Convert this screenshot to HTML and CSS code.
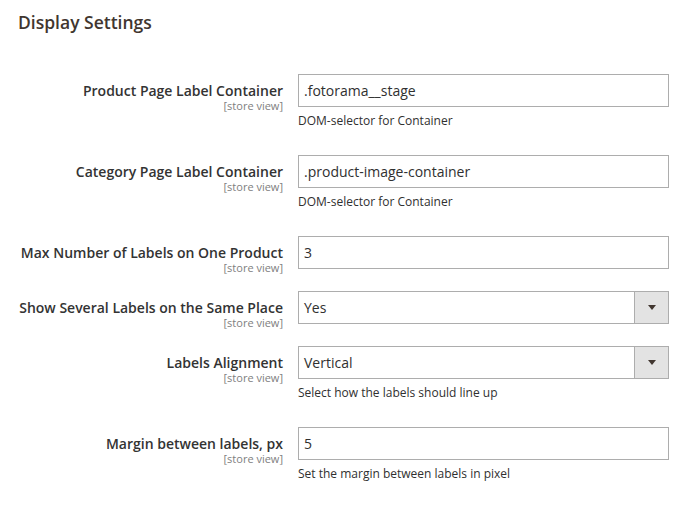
FILE: index.html
```html
<!DOCTYPE html>
<html lang="en">
<head>
<meta charset="utf-8">
<title>Display Settings</title>
<link rel="stylesheet" href="styles.css">
</head>
<body>
<section class="section">
  <h2 class="section-title">Display Settings</h2>
  <div class="config">
    <div class="row">
      <div class="label"><span class="label-text">Product Page Label Container</span><span class="scope">[store view]</span></div>
      <div class="value">
        <div class="input">.fotorama__stage</div>
        <p class="note">DOM-selector for Container</p>
      </div>
    </div>
    <div class="row">
      <div class="label"><span class="label-text">Category Page Label Container</span><span class="scope">[store view]</span></div>
      <div class="value">
        <div class="input">.product-image-container</div>
        <p class="note">DOM-selector for Container</p>
      </div>
    </div>
    <div class="row">
      <div class="label"><span class="label-text">Max Number of Labels on One Product</span><span class="scope">[store view]</span></div>
      <div class="value">
        <div class="input">3</div>
      </div>
    </div>
    <div class="row">
      <div class="label"><span class="label-text">Show Several Labels on the Same Place</span><span class="scope">[store view]</span></div>
      <div class="value">
        <div class="select"><span class="select-value">Yes</span><span class="select-arrow"></span></div>
      </div>
    </div>
    <div class="row">
      <div class="label"><span class="label-text">Labels Alignment</span><span class="scope">[store view]</span></div>
      <div class="value">
        <div class="select"><span class="select-value">Vertical</span><span class="select-arrow"></span></div>
        <p class="note">Select how the labels should line up</p>
      </div>
    </div>
    <div class="row">
      <div class="label"><span class="label-text">Margin between labels, px</span><span class="scope">[store view]</span></div>
      <div class="value">
        <div class="input">5</div>
        <p class="note">Set the margin between labels in pixel</p>
      </div>
    </div>
  </div>
</section>
</body>
</html>
```
FILE: styles.css
```css
html, body {
  margin: 0;
  padding: 0;
  background: #ffffff;
}

body {
  font-family: "Open Sans", "Noto Sans", sans-serif;
  color: #303030;
}

.section {
  padding: 11px 0 0 18px;
}

.section-title {
  margin: 0;
  font-size: 17.5px;
  line-height: 23px;
  font-weight: 600;
  color: #41362f;
}

.config {
  margin-top: 18px;
  margin-left: -18px;
}

.row {
  display: grid;
  grid-template-columns: 283px 371px;
  column-gap: 15px;
  align-items: start;
  padding-top: 22px;
}

.label {
  box-sizing: border-box;
  height: 33px;
  display: flex;
  flex-direction: column;
  align-items: flex-end;
  text-align: right;
  padding-top: 8px;
}

.label-text {
  font-size: 14px;
  line-height: 17px;
  font-weight: 600;
  color: #333333;
  white-space: nowrap;
}

.scope {
  font-size: 11px;
  line-height: 13px;
  color: #808080;
}

.value {
  display: flex;
  flex-direction: column;
}

.input,
.select {
  box-sizing: border-box;
  height: 33px;
  border: 1px solid #adadad;
  font-size: 14px;
  line-height: 31px;
  color: #303030;
  background: #ffffff;
}

.input {
  padding: 0 5px;
}

.select {
  display: flex;
}

.select-value {
  flex: 1;
  padding: 0 5px;
}

.select-arrow {
  width: 33px;
  border-left: 1px solid #adadad;
  background: #e3e3e3;
  display: flex;
  align-items: center;
  justify-content: center;
}

.select-arrow::before {
  content: "";
  width: 0;
  height: 0;
  border-left: 4px solid transparent;
  border-right: 4px solid transparent;
  border-top: 5px solid #41362f;
}

.note {
  margin: 5px 0 0;
  padding-bottom: 4px;
  font-size: 12px;
  line-height: 17px;
  color: #303030;
}
```
